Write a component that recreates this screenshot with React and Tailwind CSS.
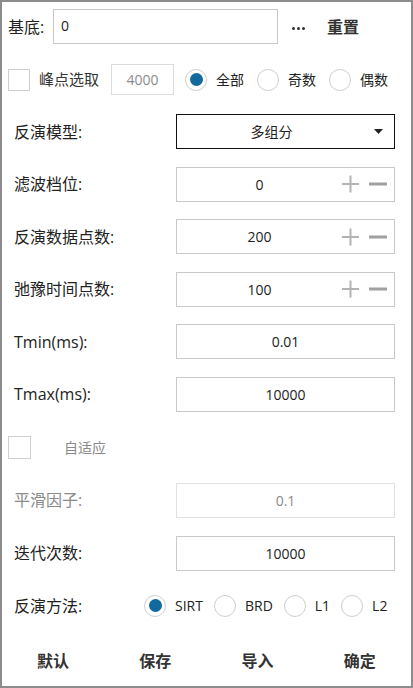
import React, { useState } from "react";

const font = { fontFamily: '"Open Sans", "Noto Sans CJK SC", sans-serif' };

function Radio({ checked, label, onClick }) {
  return (
    <button className="flex items-center" onClick={onClick}>
      <span className="w-[22px] h-[22px] rounded-full border-[1.5px] border-[#cfcfcf] flex items-center justify-center bg-white">
        {checked && <span className="w-[13px] h-[13px] rounded-full bg-[#11699e]"></span>}
      </span>
      <span className="ml-[9px] text-[14px] text-[#222]">{label}</span>
    </button>
  );
}

function Stepper({ value }) {
  return (
    <div className="w-[219px] h-[35px] border border-[#c9c9c9] flex items-center bg-white">
      <div className="flex-1 text-center text-[14px] text-[#222]">{value}</div>
      <svg width="46" height="20" viewBox="0 0 46 20" className="mr-[6px]">
        <rect x="0" y="9" width="17" height="2" fill="#b3b3b3" />
        <rect x="7.5" y="1.5" width="2" height="17" fill="#b3b3b3" />
        <rect x="27" y="8.5" width="18" height="3" fill="#a0a0a0" />
      </svg>
    </div>
  );
}

function Field({ value, disabled }) {
  return (
    <div
      className={`w-[219px] h-[35px] border flex items-center justify-center text-[14px] bg-white ${
        disabled ? "border-[#e2e2e2] text-[#8a8a8a]" : "border-[#c9c9c9] text-[#222]"
      }`}
    >
      {value}
    </div>
  );
}

function Row({ label, children, disabled }) {
  return (
    <div className="flex items-center h-[35px]">
      <div className={`w-[174px] shrink-0 pl-[12px] text-[16px] ${disabled ? "text-[#8a8a8a]" : "text-[#222]"}`}>
        {label}
      </div>
      {children}
    </div>
  );
}

export default function App() {
  const [peak, setPeak] = useState("all");
  const [method, setMethod] = useState("SIRT");

  return (
    <div className="w-[413px] h-[688px] bg-white border-2 border-[#8c8c8c] relative overflow-hidden" style={font}>
      {/* base */}
      <div className="flex items-center mt-[7px] h-[35px]">
        <div className="pl-[6px] w-[51px] shrink-0 text-[16px] text-[#222]">基底:</div>
        <div className="w-[225px] h-[35px] border border-[#c9c9c9] text-[14px] text-[#222] pl-[7px] pt-[5px]">0</div>
        <div className="ml-[14px] mt-[3px] flex items-center gap-[2px]">
          <span className="w-[3px] h-[3px] rounded-full bg-[#333]"></span>
          <span className="w-[3px] h-[3px] rounded-full bg-[#333]"></span>
          <span className="w-[3px] h-[3px] rounded-full bg-[#333]"></span>
        </div>
        <div className="ml-[22px] text-[16px] font-bold text-[#333]">重置</div>
      </div>

      {/* peak */}
      <div className="flex items-center mt-[20px] h-[31px]">
        <span className="ml-[6px] w-[22px] h-[22px] border border-[#cfcfcf]"></span>
        <span className="ml-[9px] text-[15px] text-[#333]">峰点选取</span>
        <div className="ml-[12px] w-[63px] h-[31px] border border-[#dcdcdc] flex items-center justify-center text-[14px] text-[#8a8a8a]">
          4000
        </div>
        <div className="ml-[11px] flex items-center gap-[13px]">
          <Radio checked={peak === "all"} label="全部" onClick={() => setPeak("all")} />
          <Radio checked={peak === "odd"} label="奇数" onClick={() => setPeak("odd")} />
          <Radio checked={peak === "even"} label="偶数" onClick={() => setPeak("even")} />
        </div>
      </div>

      <div className="flex flex-col gap-[17.6px] mt-[19px]">
        <Row label="反演模型:">
          <div className="w-[219px] h-[35px] border border-[#111] flex items-center">
            <div className="flex-1 text-center text-[14px] text-[#222] pl-[12px]">多组分</div>
            <svg width="9" height="5" viewBox="0 0 9 5" className="ml-[20px] mr-[11px]">
              <path d="M0 0 L9 0 L4.5 5 Z" fill="#222" />
            </svg>
          </div>
        </Row>
        <Row label="滤波档位:">
          <Stepper value="0" />
        </Row>
        <Row label="反演数据点数:">
          <Stepper value="200" />
        </Row>
        <Row label="弛豫时间点数:">
          <Stepper value="100" />
        </Row>
        <Row label="Tmin(ms):">
          <Field value="0.01" />
        </Row>
        <Row label="Tmax(ms):">
          <Field value="10000" />
        </Row>
      </div>

      {/* adaptive */}
      <div className="flex items-center mt-[24px] h-[24px]">
        <span className="ml-[6px] w-[23px] h-[23px] border border-[#cfcfcf]"></span>
        <span className="ml-[33px] text-[14px] text-[#8a8a8a]">自适应</span>
      </div>

      <div className="flex flex-col gap-[17.6px] mt-[23px]">
        <Row label="平滑因子:" disabled>
          <Field value="0.1" disabled />
        </Row>
        <Row label="迭代次数:">
          <Field value="10000" />
        </Row>
      </div>

      {/* method */}
      <div className="flex items-center mt-[23px] h-[24px]">
        <div className="w-[142px] shrink-0 pl-[12px] text-[16px] text-[#222]">反演方法:</div>
        <div className="flex items-center gap-[11px]">
          <Radio checked={method === "SIRT"} label="SIRT" onClick={() => setMethod("SIRT")} />
          <Radio checked={method === "BRD"} label="BRD" onClick={() => setMethod("BRD")} />
          <Radio checked={method === "L1"} label="L1" onClick={() => setMethod("L1")} />
          <Radio checked={method === "L2"} label="L2" onClick={() => setMethod("L2")} />
        </div>
      </div>

      {/* buttons */}
      <div className="grid grid-cols-4 mt-[28px] h-[30px] items-center">
        {["默认", "保存", "导入", "确定"].map((t) => (
          <button key={t} className="text-center text-[16px] font-bold text-[#333]">
            {t}
          </button>
        ))}
      </div>
    </div>
  );
}
